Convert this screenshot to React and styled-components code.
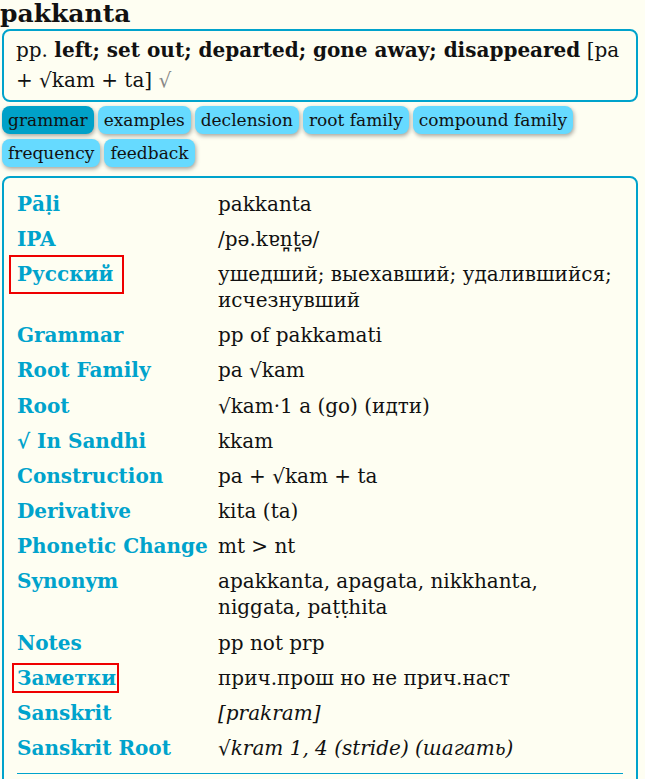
import React from 'react';
import styled, { createGlobalStyle } from 'styled-components';

const GlobalStyle = createGlobalStyle`
  html, body {
    margin: 0;
    padding: 0;
    background-color: #fefef2;
  }
`;

const summary = {
  pos: 'pp.',
  meaning: 'left; set out; departed; gone away; disappeared',
  construction: '[pa + √kam + ta]',
};

const tabs = [
  { name: 'grammar', active: true },
  { name: 'examples' },
  { name: 'declension' },
  { name: 'root family' },
  { name: 'compound family' },
  { name: 'frequency' },
  { name: 'feedback' },
];

const rows = [
  { label: 'Pāḷi', value: 'pakkanta' },
  { label: 'IPA', value: '/pə.kɐn̪t̪ə/' },
  { label: 'Русский', value: 'ушедший; выехавший; удалившийся; исчезнувший', mark: 'wide' },
  { label: 'Grammar', value: 'pp of pakkamati' },
  { label: 'Root Family', value: 'pa √kam' },
  { label: 'Root', value: '√kam·1 a (go) (идти)' },
  { label: '√ In Sandhi', value: 'kkam' },
  { label: 'Construction', value: 'pa + √kam + ta' },
  { label: 'Derivative', value: 'kita (ta)' },
  { label: 'Phonetic Change', value: 'mt > nt' },
  { label: 'Synonym', value: 'apakkanta, apagata, nikkhanta, niggata, paṭṭhita' },
  { label: 'Notes', value: 'pp not prp' },
  { label: 'Заметки', value: 'прич.прош но не прич.наст', mark: 'tight' },
  { label: 'Sanskrit', value: '[prakram]', italic: true },
  { label: 'Sanskrit Root', value: '√kram 1, 4 (stride) (шагать)', italic: true },
];

export default function App() {
  return (
    <Page>
      <GlobalStyle />
      <Headword>pakkanta</Headword>
      <SummaryBox>
        {summary.pos} <b>{summary.meaning}</b> {summary.construction} <Root>√</Root>
      </SummaryBox>
      <TabBar>
        {tabs.map(tab => (
          <TabButton key={tab.name} $active={tab.active}>
            {tab.name}
          </TabButton>
        ))}
      </TabBar>
      <DetailBox>
        <Grid>
          {rows.map(row => (
            <React.Fragment key={row.label}>
              <Label>
                {row.mark ? <Marked $kind={row.mark}>{row.label}</Marked> : row.label}
              </Label>
              <Value $italic={row.italic}>{row.value}</Value>
            </React.Fragment>
          ))}
        </Grid>
        <Rule />
      </DetailBox>
    </Page>
  );
}

const Page = styled.div`
  width: 640px;
  font-family: "DejaVu Serif", serif;
  color: #111;
`;

const Headword = styled.h1`
  margin: 0;
  font-size: 25px;
  line-height: 28px;
  font-weight: bold;
`;

const SummaryBox = styled.div`
  margin: 1px 2px 0;
  padding: 4px 12px 5px;
  border: 2px solid #00a3cc;
  border-radius: 8px;
  font-size: 20px;
  line-height: 30px;
`;

const Root = styled.span`
  color: #888;
`;

const TabBar = styled.div`
  display: flex;
  flex-wrap: wrap;
  gap: 5px 4px;
  margin: 4px 2px 0;
`;

const TabButton = styled.button`
  font-family: "DejaVu Serif", serif;
  font-size: 17px;
  line-height: 28px;
  height: 28px;
  padding: 0 6px;
  border: none;
  border-radius: 8px;
  color: #111;
  background-color: ${p => (p.$active ? '#00a1c8' : '#66daff')};
  box-shadow: 1px 2px 4px rgba(0, 0, 0, 0.35);
`;

const DetailBox = styled.div`
  margin: 9px 2px 0;
  padding: 8px 13px 0;
  border: 2px solid #00a3cc;
  border-radius: 8px;
  min-height: 610px;
`;

const Grid = styled.div`
  display: grid;
  grid-template-columns: 201px 1fr;
  font-size: 20px;
  line-height: 26px;
`;

const Label = styled.div`
  padding: 4.6px 0;
  color: #00a3cc;
  font-weight: bold;
  white-space: nowrap;
`;

const Marked = styled.span`
  display: inline-block;
  border: 2px solid #ee0000;
  line-height: ${p => (p.$kind === 'wide' ? '35px' : '26px')};
  margin: ${p => (p.$kind === 'wide' ? '-6.5px 0 -6.5px -8px' : '-2px 0 -2px -5px')};
  padding: ${p => (p.$kind === 'wide' ? '0 9px 0 6px' : '0 1px 0 3px')};
`;

const Value = styled.div`
  padding: 4.6px 0;
  font-style: ${p => (p.$italic ? 'italic' : 'normal')};
`;

const Rule = styled.hr`
  margin: 7px 0 0;
  border: none;
  border-top: 1px solid #00a3cc;
`;
